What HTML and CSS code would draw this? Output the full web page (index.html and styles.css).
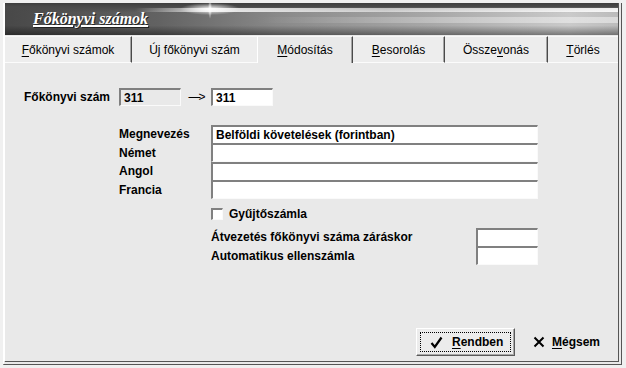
FILE: index.html
```html
<!DOCTYPE html>
<html lang="hu">
<head>
  <meta charset="UTF-8">
  <title>Főkönyvi számok</title>
  <link rel="stylesheet" href="styles.css">
</head>
<body>
  <div class="window">
    <div class="banner">
      <span class="banner-title">Főkönyvi számok</span>
    </div>

    <div class="tabs">
      <div class="tab tab-1"><span><u>F</u>őkönyvi számok</span></div>
      <div class="tab tab-2"><span>Ú<u>j</u> főkönyvi szám</span></div>
      <div class="tab tab-3 active"><span><u>M</u>ódosítás</span></div>
      <div class="tab tab-4"><span><u>B</u>esorolás</span></div>
      <div class="tab tab-5"><span>Össze<u>v</u>onás</span></div>
      <div class="tab tab-6"><span><u>T</u>örlés</span></div>
    </div>

    <div class="panel">
      <div class="number-row">
        <span class="lbl lbl-number">Főkönyvi szám</span>
        <div class="field field-short field-disabled">311</div>
        <span class="arrow">—&gt;</span>
        <div class="field field-short">311</div>
      </div>

      <div class="names">
        <span class="lbl">Megnevezés</span>
        <div class="field">Belföldi követelések (forintban)</div>
        <span class="lbl">Német</span>
        <div class="field"></div>
        <span class="lbl">Angol</span>
        <div class="field"></div>
        <span class="lbl">Francia</span>
        <div class="field"></div>
      </div>

      <div class="check-row">
        <span class="checkbox"></span>
        <span class="lbl">Gyűjtőszámla</span>
      </div>

      <div class="extra">
        <span class="lbl">Átvezetés főkönyvi száma záráskor</span>
        <div class="field field-short"></div>
        <span class="lbl">Automatikus ellenszámla</span>
        <div class="field field-short"></div>
      </div>

      <div class="actions">
        <button class="btn btn-ok">
          <span class="focus">
            <svg width="13" height="13" viewBox="0 0 13 13"><path d="M1.5 7 L4.8 11 L11.5 1.5" fill="none" stroke="#000" stroke-width="2.2"/></svg>
            <span><u>R</u>endben</span>
          </span>
        </button>
        <button class="btn btn-flat">
          <svg width="12" height="12" viewBox="0 0 12 12"><path d="M1.5 1.5 L10.5 10.5 M10.5 1.5 L1.5 10.5" fill="none" stroke="#000" stroke-width="2"/></svg>
          <span><u>M</u>égsem</span>
        </button>
      </div>
    </div>
  </div>
</body>
</html>
```

FILE: styles.css
```css
body {
  margin: 0;
  padding-top: 3px;
  background-color: #f0f0f0;
  font-family: 'Liberation Sans', Arial, sans-serif;
  font-size: 12px;
  color: #000;
}
.window {
  margin-left: 3px;
  width: 613px;
  height: 358px;
  border-left: 2px solid #fff;
  border-right: 4px double #555;
  border-bottom: 4px double #555;
  display: flex;
  flex-direction: column;
  background-color: #e9e9e9;
}
.banner {
  height: 32px;
  flex: none;
  display: flex;
  align-items: center;
  padding-left: 28px;
  background:
    radial-gradient(ellipse 30px 6px at 205px 6px, #fff, rgba(255,255,255,0)),
    radial-gradient(ellipse 2px 10px at 205px 6px, rgba(255,255,255,.9), rgba(255,255,255,0)),
    linear-gradient(to right, rgba(255,255,255,0) 130px, rgba(255,255,255,.85) 205px, rgba(255,255,255,.6) 380px, rgba(255,255,255,.9) 613px) 0 5px / 100% 4px no-repeat,
    linear-gradient(to right, rgba(255,255,255,0) 250px, rgba(255,255,255,.3) 450px, rgba(255,255,255,.45) 613px) 0 14px / 100% 6px no-repeat,
    linear-gradient(to bottom, #3e3e3e 0, #4a4a4a 12%, rgba(0,0,0,0) 30%, rgba(0,0,0,0) 70%, rgba(0,0,0,.4) 100%),
    linear-gradient(to right, #484848 0, #626262 25%, #8a8a8a 45%, #a8a8a8 70%, #cacaca 92%, #bcbcbc 100%);
}
.banner-title {
  font-family: 'Liberation Serif', 'Times New Roman', serif;
  font-weight: bold;
  font-style: italic;
  font-size: 16px;
  color: #fff;
  text-decoration: underline;
  text-decoration-thickness: 2px;
  text-shadow: 1px 1px 0 #222;
}
.tabs {
  display: flex;
  height: 27px;
  margin-top: 1px;
  flex: none;
}
.tab {
  box-sizing: border-box;
  display: flex;
  align-items: center;
  justify-content: center;
  background-color: #ededed;
  border-top: 1px solid #f8f8f8;
  border-right: 1px solid #4a4a4a;
  border-bottom: 1px solid #fbfbfb;
  box-shadow: inset -1px 0 0 #a4a4a4;
}
.tab u, .btn u {
  text-underline-offset: 2px;
}
.tab.active {
  background-color: #e9e9e9;
  border-left: 1px solid #fff;
  border-bottom: none;
}
.tab-1 { width: 127px; }
.tab-2 { width: 125px; border-right: none; box-shadow: none; }
.tab-3 { width: 96px; }
.tab-4 { width: 92px; }
.tab-5 { width: 103px; }
.tab-6 { flex: 1; border-right: none; box-shadow: none; }
.panel {
  flex: 1;
  display: flex;
  flex-direction: column;
  padding: 25px 0 5px 19px;
}
.lbl {
  font-weight: bold;
}
.field {
  box-sizing: border-box;
  height: 18px;
  padding: 0 3px;
  display: flex;
  align-items: center;
  font-weight: bold;
  background-color: #fff;
  border-top: 2px solid #808080;
  border-left: 2px solid #808080;
  border-right: 1px solid #fafafa;
  border-bottom: 1px solid #fafafa;
}
.field-short {
  width: 62px;
}
.field-disabled {
  background-color: #e9e9e9;
}
.number-row {
  display: flex;
  align-items: center;
}
.lbl-number {
  width: 95px;
}
.arrow {
  width: 30px;
  text-align: center;
  letter-spacing: -2px;
}
.names {
  display: grid;
  grid-template-columns: 92px 327px;
  grid-auto-rows: 18.5px;
  align-items: center;
  margin: 19px 0 0 95px;
}
.names .field {
  height: 19px;
}
.check-row {
  display: flex;
  align-items: center;
  gap: 6px;
  margin: 8px 0 0 187px;
  height: 13px;
}
.checkbox {
  box-sizing: border-box;
  width: 12px;
  height: 12px;
  background-color: #fff;
  border-top: 2px solid #808080;
  border-left: 2px solid #808080;
  border-right: 1px solid #fafafa;
  border-bottom: 1px solid #fafafa;
}
.extra {
  display: grid;
  grid-template-columns: 265px 62px;
  grid-auto-rows: 18.5px;
  align-items: center;
  margin: 8px 0 0 187px;
}
.extra .field {
  height: 19px;
}
.actions {
  margin-top: auto;
  display: flex;
  justify-content: flex-end;
  align-items: center;
  gap: 18px;
  padding-right: 18px;
}
.btn {
  font-family: inherit;
  font-size: 12px;
  font-weight: bold;
  color: #000;
  cursor: pointer;
  display: flex;
  align-items: center;
}
.btn-ok {
  box-sizing: border-box;
  width: 99px;
  height: 28px;
  padding: 3px;
  background-color: #ececec;
  border-top: 1px solid #fff;
  border-left: 1px solid #fff;
  border-right: 1px solid #5a5a5a;
  border-bottom: 1px solid #5a5a5a;
  box-shadow: inset -1px -1px 0 #a8a8a8;
}
.focus {
  flex: 1;
  height: 100%;
  box-sizing: border-box;
  border: 1px dotted #000;
  display: flex;
  align-items: center;
  gap: 9px;
  padding-left: 9px;
}
.btn-flat {
  background: none;
  border: none;
  padding: 0;
  gap: 7px;
}
```
